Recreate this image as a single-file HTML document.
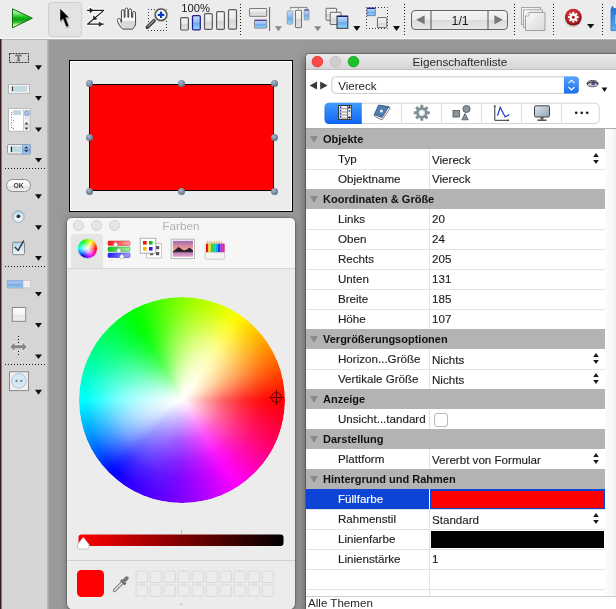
<!DOCTYPE html>
<html><head><meta charset="utf-8">
<style>
*{margin:0;padding:0;box-sizing:border-box}
html,body{width:616px;height:609px;overflow:hidden;background:#999;font-family:"Liberation Sans",sans-serif;position:relative}
.a{position:absolute}
#tb,#pal,#cp,#pw{will-change:transform}
#tb{left:0;top:0;width:616px;height:40px;background:#ececec;border-bottom:1px solid #b4b4b4}
#pal{left:0;top:40px;width:47px;height:569px;background:#d5d5d5}
#palEdge{left:47px;top:40px;width:2px;height:569px;background:linear-gradient(90deg,#bdbdbd,#a6a6a6)}
.tri{position:absolute;width:0;height:0;border-left:4px solid transparent;border-right:4px solid transparent;border-top:5px solid #111}
.dsep{position:absolute;border-left:1px dotted #222;width:0}
.hsep{position:absolute;border-top:1px dotted #222;height:0}
/* form */
#form{left:69px;top:60px;width:224px;height:152px;background:#ececec;border:1px solid #000;box-shadow:inset 0 0 0 1px #fff}
#rect{left:89px;top:84px;width:185px;height:107px;background:#f00;border:1px solid #000}
.hd{position:absolute;width:7px;height:7px;border-radius:50%;background:radial-gradient(circle at 40% 35%,#aebccb,#6f8197 55%,#505f72)}
/* colors panel */
#cp{left:67px;top:218px;width:228px;height:392px;background:#ececec;border-radius:5px 5px 7px 7px;overflow:hidden;box-shadow:0 0 0 1px rgba(0,0,0,.15),0 1px 6px rgba(0,0,0,.35)}
#cpTop{left:0;top:0;width:228px;height:51px;background:#f6f6f6;border-bottom:1px solid #d6d6d6}
.tl{position:absolute;width:11px;height:11px;border-radius:50%;background:#e6e6e6;border:1px solid #d2d2d2}
#wheel{left:0;top:0;width:206px;height:206px;border-radius:50%;
 background:radial-gradient(circle closest-side,#fff 0%,rgba(255,255,255,.92) 6%,rgba(255,255,255,.6) 22%,rgba(255,255,255,.28) 40%,rgba(255,255,255,.07) 60%,rgba(255,255,255,0) 76%),
 conic-gradient(from 90deg,#ff0000 0deg,#ff0014 5deg,#ff0027 10deg,#ff003a 15deg,#ff004d 20deg,#ff0061 25deg,#ff0077 30deg,#ff008f 35deg,#ff00a9 40deg,#ff00c3 45deg,#ff00dd 50deg,#ff00f5 55deg,#f300ff 60deg,#de00ff 65deg,#ca00ff 70deg,#b700ff 75deg,#a400ff 80deg,#9100ff 85deg,#8000ff 90deg,#7100ff 95deg,#6400ff 100deg,#5800ff 105deg,#4c00ff 110deg,#3f00ff 115deg,#3200ff 120deg,#2300ff 125deg,#1000ff 130deg,#000bff 135deg,#0028ff 140deg,#0047ff 145deg,#0064ff 150deg,#0080ff 155deg,#009bff 160deg,#00b4ff 165deg,#00cdff 170deg,#00e6ff 175deg,#00ffff 180deg,#00ffeb 185deg,#00ffd7 190deg,#00ffc3 195deg,#00ffaf 200deg,#00ff9b 205deg,#00ff87 210deg,#00ff72 215deg,#00ff5d 220deg,#00ff47 225deg,#00ff32 230deg,#00ff1b 235deg,#00ff05 240deg,#12ff00 245deg,#2aff00 250deg,#42ff00 255deg,#5aff00 260deg,#72ff00 265deg,#88ff00 270deg,#9cff00 275deg,#afff00 280deg,#c0ff00 285deg,#d1ff00 290deg,#e2ff00 295deg,#f4ff00 300deg,#fff700 305deg,#ffe200 310deg,#ffcd00 315deg,#ffb800 320deg,#ffa200 325deg,#ff8c00 330deg,#ff7600 335deg,#ff5e00 340deg,#ff4600 345deg,#ff2e00 350deg,#ff1700 355deg,#ff0000 360deg)}
#wheel2{left:0;top:0;width:206px;height:206px;border-radius:50%;
 background:radial-gradient(circle closest-side,rgba(255,255,255,.8) 0%,rgba(255,255,255,.7) 40%,rgba(255,255,255,.5) 62%,rgba(255,255,255,.22) 80%,rgba(255,255,255,0) 94%);
 -webkit-mask-image:conic-gradient(from 90deg,rgba(0,0,0,0.20) 0deg,rgba(0,0,0,0.18) 6deg,rgba(0,0,0,0.18) 12deg,rgba(0,0,0,0.19) 18deg,rgba(0,0,0,0.20) 24deg,rgba(0,0,0,0.20) 30deg,rgba(0,0,0,0.18) 36deg,rgba(0,0,0,0.14) 42deg,rgba(0,0,0,0.10) 48deg,rgba(0,0,0,0.07) 54deg,rgba(0,0,0,0.05) 60deg,rgba(0,0,0,0.04) 66deg,rgba(0,0,0,0.04) 72deg,rgba(0,0,0,0.05) 78deg,rgba(0,0,0,0.07) 84deg,rgba(0,0,0,0.10) 90deg,rgba(0,0,0,0.15) 96deg,rgba(0,0,0,0.21) 102deg,rgba(0,0,0,0.29) 108deg,rgba(0,0,0,0.37) 114deg,rgba(0,0,0,0.45) 120deg,rgba(0,0,0,0.54) 126deg,rgba(0,0,0,0.64) 132deg,rgba(0,0,0,0.75) 138deg,rgba(0,0,0,0.84) 144deg,rgba(0,0,0,0.90) 150deg,rgba(0,0,0,0.94) 156deg,rgba(0,0,0,0.96) 162deg,rgba(0,0,0,0.96) 168deg,rgba(0,0,0,0.94) 174deg,rgba(0,0,0,0.90) 180deg,rgba(0,0,0,0.83) 186deg,rgba(0,0,0,0.73) 192deg,rgba(0,0,0,0.61) 198deg,rgba(0,0,0,0.50) 204deg,rgba(0,0,0,0.40) 210deg,rgba(0,0,0,0.31) 216deg,rgba(0,0,0,0.21) 222deg,rgba(0,0,0,0.12) 228deg,rgba(0,0,0,0.06) 234deg,rgba(0,0,0,0.05) 240deg,rgba(0,0,0,0.10) 246deg,rgba(0,0,0,0.19) 252deg,rgba(0,0,0,0.31) 258deg,rgba(0,0,0,0.44) 264deg,rgba(0,0,0,0.55) 270deg,rgba(0,0,0,0.66) 276deg,rgba(0,0,0,0.77) 282deg,rgba(0,0,0,0.88) 288deg,rgba(0,0,0,0.97) 294deg,rgba(0,0,0,1.00) 300deg,rgba(0,0,0,0.97) 306deg,rgba(0,0,0,0.90) 312deg,rgba(0,0,0,0.80) 318deg,rgba(0,0,0,0.69) 324deg,rgba(0,0,0,0.60) 330deg,rgba(0,0,0,0.51) 336deg,rgba(0,0,0,0.42) 342deg,rgba(0,0,0,0.33) 348deg,rgba(0,0,0,0.25) 354deg,rgba(0,0,0,0.20) 360deg);mask-image:conic-gradient(from 90deg,rgba(0,0,0,0.20) 0deg,rgba(0,0,0,0.18) 6deg,rgba(0,0,0,0.18) 12deg,rgba(0,0,0,0.19) 18deg,rgba(0,0,0,0.20) 24deg,rgba(0,0,0,0.20) 30deg,rgba(0,0,0,0.18) 36deg,rgba(0,0,0,0.14) 42deg,rgba(0,0,0,0.10) 48deg,rgba(0,0,0,0.07) 54deg,rgba(0,0,0,0.05) 60deg,rgba(0,0,0,0.04) 66deg,rgba(0,0,0,0.04) 72deg,rgba(0,0,0,0.05) 78deg,rgba(0,0,0,0.07) 84deg,rgba(0,0,0,0.10) 90deg,rgba(0,0,0,0.15) 96deg,rgba(0,0,0,0.21) 102deg,rgba(0,0,0,0.29) 108deg,rgba(0,0,0,0.37) 114deg,rgba(0,0,0,0.45) 120deg,rgba(0,0,0,0.54) 126deg,rgba(0,0,0,0.64) 132deg,rgba(0,0,0,0.75) 138deg,rgba(0,0,0,0.84) 144deg,rgba(0,0,0,0.90) 150deg,rgba(0,0,0,0.94) 156deg,rgba(0,0,0,0.96) 162deg,rgba(0,0,0,0.96) 168deg,rgba(0,0,0,0.94) 174deg,rgba(0,0,0,0.90) 180deg,rgba(0,0,0,0.83) 186deg,rgba(0,0,0,0.73) 192deg,rgba(0,0,0,0.61) 198deg,rgba(0,0,0,0.50) 204deg,rgba(0,0,0,0.40) 210deg,rgba(0,0,0,0.31) 216deg,rgba(0,0,0,0.21) 222deg,rgba(0,0,0,0.12) 228deg,rgba(0,0,0,0.06) 234deg,rgba(0,0,0,0.05) 240deg,rgba(0,0,0,0.10) 246deg,rgba(0,0,0,0.19) 252deg,rgba(0,0,0,0.31) 258deg,rgba(0,0,0,0.44) 264deg,rgba(0,0,0,0.55) 270deg,rgba(0,0,0,0.66) 276deg,rgba(0,0,0,0.77) 282deg,rgba(0,0,0,0.88) 288deg,rgba(0,0,0,0.97) 294deg,rgba(0,0,0,1.00) 300deg,rgba(0,0,0,0.97) 306deg,rgba(0,0,0,0.90) 312deg,rgba(0,0,0,0.80) 318deg,rgba(0,0,0,0.69) 324deg,rgba(0,0,0,0.60) 330deg,rgba(0,0,0,0.51) 336deg,rgba(0,0,0,0.42) 342deg,rgba(0,0,0,0.33) 348deg,rgba(0,0,0,0.25) 354deg,rgba(0,0,0,0.20) 360deg)}
/* props window */
#pw{left:306px;top:54px;width:320px;height:560px;background:#fff;border-radius:4px 4px 0 0;overflow:hidden;box-shadow:0 0 0 1px rgba(0,0,0,.25),-2px 3px 8px rgba(0,0,0,.35)}
#pwTitle{left:0;top:0;width:320px;height:16px;background:linear-gradient(#eceaec,#d6d4d6);border-bottom:1px solid #c0bec0;font-size:11.7px;color:#2a2a2a;line-height:16px}
.row{position:absolute;left:0;width:299px;height:20px;box-shadow:0 1px 0 #e4e4e4;font-size:11.6px;color:#1e1e1e;-webkit-text-stroke:.15px #1e1e1e}
.row.sel{-webkit-text-stroke:.15px #fff}
.row .k{position:absolute;left:32px;top:3px;white-space:nowrap}
.row .v{position:absolute;left:126px;top:3.4px;white-space:nowrap}
.row .v.vp{top:4.4px}
.row .cd{position:absolute;left:123px;top:0;width:1px;height:21px;background:#e3e3e3}
.row.sel{background:#0c44d6}
.row.sel .cd{background:#fff}
.row.sel .k{color:#fff}
.hdr{position:absolute;left:0;width:299px;height:20px;background:#b3b3b3;font-size:11px;font-weight:bold;color:#111}
.hdr .t{position:absolute;left:17px;top:4px;white-space:nowrap}
.hdr .tr{position:absolute;left:4px;top:7px;width:0;height:0;border-left:4.5px solid transparent;border-right:4.5px solid transparent;border-top:7px solid #8a8a8a}
.ud{position:absolute;left:285.5px;top:3px}
.cb{position:absolute;left:128px;top:4px;width:14px;height:14px;border:1px solid #b8b8b8;border-radius:3px;background:#fff}
.well{position:absolute;left:125px;top:2px;width:173px;height:17px}
.selbox{position:absolute;left:0;top:0;width:123px;height:20px;background:#0f4fd0}
#scr{left:299px;top:75px;width:21px;height:467px;background:linear-gradient(90deg,#fdfdfd 0,#f9f9f9 2px,#f9f9f9 9px,#ebebeb 9px,#ebebeb 10px,#f6f6f6 10px)}
#tline{left:0;top:74px;width:320px;height:1px;background:#ababab}
#foot{left:0;top:542px;width:320px;height:20px;border-top:1px solid #cfcfcf;background:#fff;font-size:11.6px;color:#1e1e1e;padding-left:2px;line-height:11px}

</style></head><body>
<div id="tb" class="a"><svg class="a" style="left:0;top:0" width="616" height="40" viewBox="0 0 616 40">
<defs>
<linearGradient id="gPlay" x1="0" y1="0" x2="0" y2="1">
 <stop offset="0" stop-color="#c8f4c0"/><stop offset=".22" stop-color="#8ee88a"/><stop offset=".4" stop-color="#22cc2a"/><stop offset=".55" stop-color="#08a00e"/><stop offset=".72" stop-color="#38c038"/><stop offset=".86" stop-color="#e2f0b0"/><stop offset="1" stop-color="#f8f2c4"/>
</linearGradient>
<linearGradient id="gBar" x1="0" y1="0" x2="0" y2="1">
 <stop offset="0" stop-color="#f6f6f6"/><stop offset=".5" stop-color="#e8e8e8"/><stop offset=".52" stop-color="#d6d6d6"/><stop offset="1" stop-color="#e6e6e6"/>
</linearGradient>
<linearGradient id="gBlue" x1="0" y1="0" x2="0" y2="1">
 <stop offset="0" stop-color="#c8dcf8"/><stop offset=".45" stop-color="#8fbdf2"/><stop offset=".55" stop-color="#6fa8ee"/><stop offset="1" stop-color="#8ee0f8"/>
</linearGradient>
<linearGradient id="gNav" x1="0" y1="0" x2="0" y2="1">
 <stop offset="0" stop-color="#f4f4f4"/><stop offset=".5" stop-color="#ececec"/><stop offset=".52" stop-color="#dcdcdc"/><stop offset="1" stop-color="#e8e8e8"/>
</linearGradient>
<linearGradient id="gPage" x1="0" y1="0" x2="1" y2="1">
 <stop offset="0" stop-color="#fbfbfb"/><stop offset="1" stop-color="#d8d8d8"/>
</linearGradient>
<radialGradient id="gGear" cx=".45" cy=".35" r=".65">
 <stop offset="0" stop-color="#e0484c"/><stop offset=".7" stop-color="#b31d22"/><stop offset="1" stop-color="#7a0e12"/>
</radialGradient>
<radialGradient id="gLens" cx=".5" cy=".5" r=".5">
 <stop offset="0" stop-color="#ffffff"/><stop offset=".75" stop-color="#f0f0f0"/><stop offset="1" stop-color="#9a9a9a"/>
</radialGradient>
</defs>
<!-- play -->
<path d="M12.5 8.8 L32.3 18.2 L12.5 27.8 Z" fill="url(#gPlay)" stroke="#0e700e" stroke-width="1" stroke-linejoin="round"/>
<!-- selected arrow button -->
<rect x="48.5" y="2.5" width="33" height="34" rx="3" fill="#e3e3e3" stroke="#cfcfcf"/>
<path d="M60.3 9 L60.3 20.8 L63.2 18.5 L66.3 26.6 L68.4 25.8 L65.4 17.6 L68.4 17 Z" fill="#000" opacity=".22" transform="translate(.6 1.1)" stroke="#000" stroke-width="1.2" stroke-linejoin="round"/>
<path d="M60.3 9 L60.3 20.8 L63.2 18.5 L66.3 26.6 L68.4 25.8 L65.4 17.6 L68.4 17 Z" fill="#000"/>
<!-- Z tool -->
<g fill="#fff" stroke="#fff" stroke-width="3.2" stroke-linejoin="round" opacity=".85">
<path d="M87.1 10.4 H103.8 L87.5 24.2 H103.8" fill="none"/>
<path d="M89.8 8 L93.2 10.4 L89.8 12.8 Z"/><path d="M93.2 19.6 L93.6 15.6 L97.2 19.1 Z"/><path d="M99 21.8 L102.2 24.2 L99 26.6 Z"/>
</g>
<g fill="#1c2424" stroke="#1c2424" stroke-linejoin="round">
<path d="M87.1 10.4 H103.8 L87.5 24.2 H103.8" fill="none" stroke-width="1.2"/>
<path d="M90 8.1 L93 10.4 L90 12.7 Z" stroke-width=".6"/><path d="M93.2 19.6 L93.7 15.9 L96.9 19.1 Z" stroke-width=".6"/><path d="M99.2 21.9 L102 24.2 L99.2 26.5 Z" stroke-width=".6"/>
</g>
<!-- hand -->
<path d="M122.6 29.1 L132.7 29.1 C134 27.5 135.6 25.5 135.6 23.5 L135.6 12.8 C135.6 11 132.8 11 132.8 12.8 L132.8 17.3 L131.6 17.3 L131.6 10.2 C131.6 8.4 128.7 8.4 128.7 10.2 L128.7 17.3 L127.9 17.3 L127.9 9.3 C127.9 7.5 125 7.5 125 9.3 L125 17.3 L124.2 17.3 L124.2 11 C124.2 9.2 121.4 9.2 121.4 11 L121.4 21 C120.8 19.8 119.8 18.4 118.6 18.4 C117.6 18.4 117.2 19.2 117.4 20.5 C117.8 23.5 120 26.5 122.6 29.1 Z" fill="#fbfbfb" stroke="#fff" stroke-width="2.4" stroke-opacity=".6" stroke-linejoin="round"/>
<path d="M121.5 20.7 H135.3 V23.5 C135.3 25.5 134 27.3 132.6 28.6 H122.8 C121 27 119.5 25 118.7 22.8 Z" fill="#d9d9d9"/>
<path d="M122.6 29.1 L132.7 29.1 C134 27.5 135.6 25.5 135.6 23.5 L135.6 12.8 C135.6 11 132.8 11 132.8 12.8 L132.8 17.3 L131.6 17.3 L131.6 10.2 C131.6 8.4 128.7 8.4 128.7 10.2 L128.7 17.3 L127.9 17.3 L127.9 9.3 C127.9 7.5 125 7.5 125 9.3 L125 17.3 L124.2 17.3 L124.2 11 C124.2 9.2 121.4 9.2 121.4 11 L121.4 21 C120.8 19.8 119.8 18.4 118.6 18.4 C117.6 18.4 117.2 19.2 117.4 20.5 C117.8 23.5 120 26.5 122.6 29.1 Z" fill="none" stroke="#3a3a3a" stroke-width="1" stroke-linejoin="round"/>
<line x1="121.2" y1="19.8" x2="121.2" y2="22.6" stroke="#333" stroke-width="1.2"/>
<!-- zoom -->
<rect x="148.5" y="9.5" width="18" height="21" fill="none" stroke="#333" stroke-width="1" stroke-dasharray="1 2" stroke-dashoffset=".5"/>
<path d="M154.2 20.6 L147.3 27.3" stroke="#fff" stroke-width="5" stroke-linecap="round" opacity=".5"/>
<path d="M154.2 20.6 L147.3 27.3" stroke="#3a3a3a" stroke-width="3.6" stroke-linecap="round"/>
<path d="M154 20.4 L148 26.4" stroke="#a0a0a0" stroke-width="1.3" stroke-linecap="round"/>
<circle cx="161" cy="14.8" r="7.6" fill="#fff" opacity=".45"/>
<circle cx="161" cy="14.8" r="5.9" fill="#fffef8" stroke="#555" stroke-width="1.8"/>
<circle cx="161" cy="14.8" r="6.9" fill="none" stroke="#bbb" stroke-width=".6"/>
<path d="M161 11.5 V18.1 M157.7 14.8 H164.3" stroke="#0a3cc0" stroke-width="2.2"/>
<!-- 100% -->
<text x="181.3" y="12.2" font-family="Liberation Sans" font-size="11.2" fill="#1a1a1a">100%</text>
<g stroke="#5a5a5a" stroke-width="1.2">
<rect x="180.6" y="17.6" width="7.8" height="12.4" rx="1.2" fill="url(#gBar)"/>
<rect x="192.5" y="15.6" width="7.8" height="14.3" rx="1.2" fill="url(#gBlue)" stroke="#1c1c8a"/>
<rect x="204.5" y="13.6" width="7.8" height="15.8" rx="1.2" fill="url(#gBar)"/>
<rect x="216.6" y="11.6" width="7.8" height="17.8" rx="1.2" fill="url(#gBar)"/>
<rect x="228.5" y="9.6" width="8" height="19.6" rx="1.2" fill="url(#gBar)"/>
</g>
<line x1="240.5" y1="4" x2="240.5" y2="35" stroke="#1a1a1a" stroke-width="1" stroke-dasharray="1 2"/>
<!-- align -->
<rect x="249.5" y="8.5" width="17.2" height="7.8" rx=".5" fill="url(#gBar)" stroke="#7a7a7a"/>
<rect x="254.5" y="20.3" width="12.2" height="7.8" rx=".5" fill="url(#gBlue)" stroke="#8a8aa0"/>
<line x1="254.5" y1="20.3" x2="266.7" y2="20.3" stroke="#4a3a8a" stroke-width="1.2"/>
<line x1="269.6" y1="7" x2="269.6" y2="31" stroke="#5a5a5a" stroke-width="1"/>
<path d="M274.8 26.2 H282 L278.4 31.2 Z" fill="#8a8a8a"/>
<!-- distribute -->
<path d="M290.5 9 V7.4 H307 V9 M298.6 7.4 V9" fill="none" stroke="#777" stroke-width=".9"/>
<rect x="287.2" y="10.8" width="5.6" height="13.4" rx=".8" fill="url(#gBlue)" stroke="#8a9aaa" stroke-width=".8"/>
<rect x="295.5" y="10.3" width="6" height="17.3" rx=".5" fill="url(#gBar)" stroke="#707070" stroke-width="1"/>
<rect x="304.2" y="10" width="4.8" height="10" rx=".8" fill="url(#gBlue)" stroke="#8a9aaa" stroke-width=".8"/>
<line x1="304.2" y1="10" x2="309" y2="10" stroke="#3a3a8a" stroke-width="1.1"/>
<path d="M314.2 26.2 H321.2 L317.7 31.2 Z" fill="#8a8a8a"/>
<!-- layers -->
<rect x="326" y="8.3" width="10.6" height="12" rx=".5" fill="url(#gBar)" stroke="#6a6a6a" stroke-width="1"/>
<rect x="330.2" y="12.3" width="10.8" height="12.2" rx=".5" fill="url(#gBar)" stroke="#6a6a6a" stroke-width="1"/>
<rect x="337" y="16.3" width="10.8" height="12" fill="url(#gBlue)" stroke="#3a3a4a" stroke-width="1.1"/>
<line x1="337" y1="16.3" x2="347.8" y2="16.3" stroke="#1a1a7a" stroke-width="1.4"/>
<path d="M353.3 26 H360.3 L356.8 31 Z" fill="#111"/>
<!-- group -->
<rect x="366.5" y="7.5" width="21" height="21" fill="none" stroke="#333" stroke-width="1" stroke-dasharray="1 2" stroke-dashoffset=".5"/>
<rect x="367" y="8.3" width="8.2" height="7.4" fill="url(#gBlue)" stroke="#5a6aaa" stroke-width=".8"/>
<line x1="367" y1="8.3" x2="375.2" y2="8.3" stroke="#1a1a8a" stroke-width="1.3"/>
<rect x="377.4" y="17.6" width="9.4" height="10" rx=".5" fill="url(#gBar)" stroke="#6a6a6a" stroke-width="1"/>
<path d="M393 26 H400 L396.5 31 Z" fill="#111"/>
<line x1="404.5" y1="4" x2="404.5" y2="35" stroke="#1a1a1a" stroke-width="1" stroke-dasharray="1 2"/>
<!-- nav -->
<rect x="411.5" y="10.5" width="96" height="19" rx="3.5" fill="url(#gNav)" stroke="#666"/>
<line x1="431" y1="10.5" x2="431" y2="29.5" stroke="#555"/>
<line x1="488" y1="10.5" x2="488" y2="29.5" stroke="#555"/>
<path d="M416.2 19.7 L424.6 15.2 L424.6 24.2 Z" fill="#777"/>
<path d="M502.8 19.7 L494.4 15.2 L494.4 24.2 Z" fill="#777"/>
<text x="451.5" y="25" font-family="Liberation Sans" font-size="12.4" fill="#1a1a1a">1/1</text>
<line x1="514.5" y1="4" x2="514.5" y2="35" stroke="#1a1a1a" stroke-width="1" stroke-dasharray="1 2"/>
<!-- pages -->
<rect x="521.5" y="7.5" width="19" height="17" fill="url(#gPage)" stroke="#a8a8a8"/>
<rect x="523.5" y="9.8" width="19" height="17.5" fill="url(#gPage)" stroke="#a8a8a8"/>
<path d="M529 12.5 H545 V30.5 H525.5 V16 Z" fill="url(#gPage)" stroke="#a0a0a0"/>
<path d="M525.5 16 L529 16 L529 12.5" fill="#fff" stroke="#a0a0a0" stroke-width=".8"/>
<line x1="553.5" y1="4" x2="553.5" y2="35" stroke="#1a1a1a" stroke-width="1" stroke-dasharray="1 2"/>
<!-- gear -->
<circle cx="573.3" cy="17.4" r="8.6" fill="#000" opacity=".18" transform="translate(0 .9)"/>
<circle cx="573.3" cy="17.2" r="8.4" fill="url(#gGear)"/>
<g transform="translate(573.3 17.2)" fill="#fff">
<circle r="3.6"/>
<g id="teeth"><rect x="-1" y="-5.3" width="2" height="2.2"/></g>
<use href="#teeth" transform="rotate(45)"/><use href="#teeth" transform="rotate(90)"/><use href="#teeth" transform="rotate(135)"/><use href="#teeth" transform="rotate(180)"/><use href="#teeth" transform="rotate(225)"/><use href="#teeth" transform="rotate(270)"/><use href="#teeth" transform="rotate(315)"/>
<circle r="1.5" fill="#b31d22"/>
</g>
<path d="M587 24 H594.3 L590.7 28.6 Z" fill="#111"/>
<line x1="602.5" y1="4" x2="602.5" y2="35" stroke="#1a1a1a" stroke-width="1" stroke-dasharray="1 2"/>
<!-- partial blue icon -->
<linearGradient id="gFold" x1="0" y1="0" x2="0" y2="1"><stop offset="0" stop-color="#1a6ed8"/><stop offset="1" stop-color="#62acf0"/></linearGradient>
<path d="M611 30.6 V9 L612.5 6 L613.5 8.5 H620 V30.6 Z" fill="url(#gFold)" stroke="#2a70c8" stroke-width=".8"/>
<rect x="615.2" y="15" width="4" height="9" fill="#cfe4f8" opacity=".8"/>
<!-- bottom edge -->
<line x1="0" y1="38.5" x2="616" y2="38.5" stroke="#f8f8f8"/>
</svg>
</div>
<div id="pal" class="a"><svg class="a" style="left:0;top:-1px" width="47" height="570" viewBox="0 39 47 570">
<defs>
<linearGradient id="pBtn" x1="0" y1="0" x2="0" y2="1">
 <stop offset="0" stop-color="#ffffff"/><stop offset=".5" stop-color="#f4f4f4"/><stop offset=".55" stop-color="#e4e4e4"/><stop offset="1" stop-color="#f0f0f0"/>
</linearGradient>
<linearGradient id="pBlue" x1="0" y1="0" x2="0" y2="1">
 <stop offset="0" stop-color="#a9c8ec"/><stop offset=".5" stop-color="#8db8ea"/><stop offset=".55" stop-color="#6aa2e6"/><stop offset="1" stop-color="#a8d4f2"/>
</linearGradient>
<radialGradient id="pRadio" cx=".5" cy=".65" r=".6">
 <stop offset="0" stop-color="#ffffff"/><stop offset=".6" stop-color="#d8ecfa"/><stop offset="1" stop-color="#a0c8e8"/>
</radialGradient>
<linearGradient id="pChk" x1="0" y1="0" x2="0" y2="1">
 <stop offset="0" stop-color="#a8d0f0"/><stop offset="1" stop-color="#f4fbff"/>
</linearGradient>
</defs>
<!-- left dark strip -->
<rect x="0" y="39" width="1.5" height="570" fill="#3a1a1e"/>
<g fill="#111">
<path d="M35 65.3 H42 L38.5 70 Z"/>
<path d="M35 96 H42 L38.5 100.8 Z"/>
<path d="M35 127.4 H42 L38.5 132 Z"/>
<path d="M35 158 H42 L38.5 162.6 Z"/>
<path d="M35 194.3 H42 L38.5 199 Z"/>
<path d="M35 225.3 H42 L38.5 230 Z"/>
<path d="M35 256.1 H42 L38.5 260.7 Z"/>
<path d="M35 292 H42 L38.5 296.6 Z"/>
<path d="M35 323 H42 L38.5 327.8 Z"/>
<path d="M35 354.5 H42 L38.5 359 Z"/>
<path d="M35 389.8 H42 L38.5 394.7 Z"/>
</g>
<g stroke="#1a1a1a" stroke-width="1" stroke-dasharray="1 2">
<line x1="5" y1="168.5" x2="46" y2="168.5"/>
<line x1="5" y1="266.5" x2="46" y2="266.5"/>
<line x1="5" y1="364.5" x2="46" y2="364.5"/>
</g>
<!-- label -->
<rect x="9.5" y="53.5" width="19" height="9" fill="none" stroke="#2a2a2a" stroke-dasharray="2 1"/>
<text x="15.6" y="61" font-family="Liberation Serif" font-weight="bold" font-size="9" fill="#6a6a6a" stroke="#6a6a6a" stroke-width=".3">T</text>
<!-- text field -->
<rect x="8.5" y="84.5" width="21" height="8.8" fill="#fafafa" stroke="#b4b4b4"/>
<rect x="10.8" y="85.8" width="16.6" height="6" fill="#c3dce4"/>
<line x1="12.5" y1="86.5" x2="12.5" y2="91" stroke="#333" stroke-width="1"/>
<!-- list -->
<rect x="8.5" y="108.5" width="21.5" height="22.8" fill="#fff" stroke="#b8b8b8"/>
<rect x="12.9" y="110.1" width="8.4" height="4.9" fill="#bcd8e0"/>
<g fill="#555"><rect x="11" y="112" width=".9" height=".9"/><rect x="11" y="114.5" width=".9" height=".9"/><rect x="11" y="117" width=".9" height=".9"/><rect x="11" y="119.5" width=".9" height=".9"/><rect x="13" y="120" width=".9" height=".9"/><rect x="11" y="122" width=".9" height=".9"/><rect x="11" y="124.5" width=".9" height=".9"/><rect x="11" y="127" width=".9" height=".9"/><rect x="13" y="128" width=".9" height=".9"/></g>
<rect x="23.6" y="108.5" width="6.4" height="22.8" fill="#f2f2f2" stroke="#c0c0c0" stroke-width=".8"/>
<rect x="24.6" y="110.6" width="4.4" height="5.2" rx="1.6" fill="#a6c2e6" stroke="#6f8fc0" stroke-width=".7"/><rect x="23.6" y="117.5" width="6.4" height="1.6" fill="#e0e0e0"/>
<path d="M24.5 124.5 L26.5 122 L28.5 124.5 Z M24.5 127.5 L28.5 127.5 L26.5 130 Z" fill="#444"/>
<line x1="23.6" y1="126" x2="30" y2="126" stroke="#c0c0c0" stroke-width=".7"/>
<!-- stepper -->
<rect x="7.5" y="144.5" width="22.8" height="9.5" rx="1.5" fill="#f6f6f6" stroke="#9a9a9a"/>
<rect x="10" y="146" width="11.8" height="6.5" fill="#c0dae4"/>
<line x1="11.5" y1="146.5" x2="11.5" y2="152" stroke="#222" stroke-width="1.1"/>
<rect x="22.4" y="144.5" width="7.8" height="9.5" fill="url(#pBlue)" stroke="#7f9ed0" stroke-width=".8"/>
<path d="M24.3 148.5 L26.3 146.3 L28.3 148.5 Z M24.3 150 L28.3 150 L26.3 152.3 Z" fill="#333"/>
<!-- OK button -->
<rect x="6.5" y="179.5" width="24" height="12" rx="6" fill="url(#pBtn)" stroke="#8e8e8e"/>
<text x="13.4" y="188.4" font-family="Liberation Sans" font-weight="bold" font-size="6.8" fill="#3a3a3a">OK</text>
<!-- radio -->
<circle cx="18.4" cy="216.5" r="5.8" fill="url(#pRadio)" stroke="#a8a8a8" stroke-width=".9"/>
<circle cx="18.4" cy="216.3" r="1.9" fill="#333"/>
<!-- checkbox -->
<rect x="12.5" y="242.2" width="12" height="12.5" rx="1.5" fill="url(#pChk)" stroke="#8a8a8a"/>
<path d="M14.8 247 L18.2 250.4 L23.8 240.5" fill="none" stroke="#333" stroke-width="1.4"/>
<!-- progress -->
<rect x="7.3" y="280.5" width="23.4" height="7.4" fill="#f0f0f0" stroke="#c6c6c6" stroke-width=".8"/>
<rect x="7.3" y="280.5" width="15.5" height="7.4" fill="url(#pBlue)" stroke="#88a8d8" stroke-width=".8"/>
<line x1="11" y1="284" x2="21" y2="284" stroke="#fff" stroke-width=".6" stroke-dasharray="1 2" opacity=".6"/>
<!-- box -->
<rect x="12.3" y="307.5" width="13.4" height="13.8" fill="url(#pBtn)" stroke="#8a8a8a"/>
<!-- splitter -->
<line x1="18.5" y1="336" x2="18.5" y2="357" stroke="#1a1a1a" stroke-dasharray="1 2"/>
<path d="M10.3 346.8 L14.2 343.2 L14.2 345.5 L22.8 345.5 L22.8 343.2 L26.7 346.8 L22.8 350.4 L22.8 348.1 L14.2 348.1 L14.2 350.4 Z" fill="#fff" stroke="#fff" stroke-width="2" opacity=".8"/><path d="M10.3 346.8 L14.2 343.2 L14.2 345.5 L22.8 345.5 L22.8 343.2 L26.7 346.8 L22.8 350.4 L22.8 348.1 L14.2 348.1 L14.2 350.4 Z" fill="#8a8a8a" stroke="#6a6a6a" stroke-width=".5"/>
<!-- plugin -->
<rect x="9.5" y="371.8" width="19" height="18.8" fill="#efefef" stroke="#8a8a8a"/>
<circle cx="18.9" cy="380.9" r="7.3" fill="#d4e8f6" stroke="#a8b8c8" stroke-width=".8"/>
<circle cx="16.5" cy="380.9" r="1.1" fill="#777"/><circle cx="21.3" cy="380.9" r="1.1" fill="#777"/>
</svg>
</div>
<div id="palEdge" class="a"></div>
<div id="form" class="a"></div>
<div id="rect" class="a"></div>
<div class="hd" style="left:85.7px;top:80.4px"></div>
<div class="hd" style="left:178.0px;top:80.4px"></div>
<div class="hd" style="left:270.5px;top:80.4px"></div>
<div class="hd" style="left:85.7px;top:134.0px"></div>
<div class="hd" style="left:270.5px;top:134.0px"></div>
<div class="hd" style="left:85.7px;top:187.5px"></div>
<div class="hd" style="left:178.0px;top:187.5px"></div>
<div class="hd" style="left:270.5px;top:187.5px"></div>
<div id="cp" class="a"><div id="cpTop" class="a"></div>
<div class="tl" style="left:5.9px;top:1.8px"></div>
<div class="tl" style="left:23.8px;top:1.8px"></div>
<div class="tl" style="left:41.9px;top:1.8px"></div>
<div class="a" style="left:0;top:0;width:228px;text-align:center;font-size:11.7px;color:#b0b0b0;line-height:16px;padding-top:0px">Farben</div>
<div class="a" style="left:4px;top:16px;width:32px;height:34px;background:#e5e5e5;border-radius:4px 4px 0 0"></div>
<div class="a" style="left:11.1px;top:21.2px;width:18.8px;height:18.8px;border-radius:50%;background:radial-gradient(circle closest-side,#fff 0%,rgba(255,255,255,.7) 35%,rgba(255,255,255,0) 90%),conic-gradient(from 90deg,#f00,#f0f,#00f,#0ff,#0f0,#ff0,#f00);box-shadow:0 .5px 1px rgba(0,0,0,.35)"></div>
<svg class="a" style="left:0;top:0" width="228" height="50" viewBox="67 218 228 50">
<defs>
<linearGradient id="cR" x1="0" x2="1"><stop offset="0" stop-color="#ff1010"/><stop offset="1" stop-color="#ffb0b0"/></linearGradient>
<linearGradient id="cG" x1="0" x2="1"><stop offset="0" stop-color="#10c010"/><stop offset="1" stop-color="#a8f0a8"/></linearGradient>
<linearGradient id="cB" x1="0" x2="1"><stop offset="0" stop-color="#2020ff"/><stop offset="1" stop-color="#a8a8ff"/></linearGradient>
<linearGradient id="cSky" x1="0" y1="0" x2="0" y2="1"><stop offset="0" stop-color="#a068b8"/><stop offset=".5" stop-color="#f0a090"/><stop offset=".62" stop-color="#e89898"/><stop offset=".68" stop-color="#403048"/><stop offset=".75" stop-color="#b880b0"/><stop offset="1" stop-color="#e8a8d0"/></linearGradient>
</defs>
<!-- sliders -->
<rect x="108" y="241" width="22" height="4.4" rx="1" fill="url(#cR)" stroke="#c02020" stroke-width=".5"/>
<rect x="108" y="247" width="22" height="4.4" rx="1" fill="url(#cG)" stroke="#20a020" stroke-width=".5"/>
<rect x="108" y="253" width="22" height="4.4" rx="1" fill="url(#cB)" stroke="#2020c0" stroke-width=".5"/>
<g fill="#fff" stroke="#999" stroke-width=".5">
<path d="M115.6 246.8 a2.2 2.2 0 0 1 -2.2 -2.2 L115.6 241.8 L117.8 244.6 a2.2 2.2 0 0 1 -2.2 2.2Z"/>
<path d="M118.8 252.8 a2.2 2.2 0 0 1 -2.2 -2.2 L118.8 247.8 L121 250.6 a2.2 2.2 0 0 1 -2.2 2.2Z"/>
<path d="M121.8 258.8 a2.2 2.2 0 0 1 -2.2 -2.2 L121.8 253.8 L124 256.6 a2.2 2.2 0 0 1 -2.2 2.2Z"/>
</g>
<!-- palettes -->
<rect x="146.5" y="243.5" width="15" height="14.5" fill="#fff" stroke="#b8b8b8" stroke-width=".8"/>
<g fill="#555"><rect x="156" y="246" width="3.2" height="3.2"/><rect x="150" y="252" width="3.2" height="3.2"/><rect x="156" y="252" width="3.2" height="3.2"/></g>
<rect x="140.3" y="238.3" width="15.5" height="14.8" fill="#fff" stroke="#b0b0b0" stroke-width=".8" filter="drop-shadow(0 .5px .6px rgba(0,0,0,.3))"/>
<rect x="143" y="241" width="3.6" height="3.6" fill="#f01010"/><rect x="149" y="241" width="3.6" height="3.6" fill="#10c020"/>
<rect x="143" y="247" width="3.6" height="3.6" fill="#f8b000"/><rect x="149" y="247" width="3.6" height="3.6" fill="#4010f0"/>
<!-- image -->
<rect x="171.2" y="239.2" width="23.4" height="19.2" fill="#fff" stroke="#a8a8a8" stroke-width=".8"/>
<rect x="172.8" y="240.8" width="20.2" height="16" fill="url(#cSky)"/>
<path d="M172.8 251.8 L175.5 249.5 L178.5 247 L181.5 249 L184 250.5 L186.5 249.8 L189.5 247.6 L193 250.5 V251.8 Z" fill="#2a1a30"/>
<!-- pencils -->
<rect x="205.2" y="244" width="19.4" height="15" rx="1.5" fill="#f4f4f4" stroke="#bdbdbd" stroke-width=".6"/>
<g>
<rect x="206" y="243.5" width="2.4" height="9" fill="#e01818"/><path d="M206 243.5 L207.2 240 L208.4 243.5Z" fill="#e8c080"/>
<rect x="208.4" y="243.5" width="2.4" height="9" fill="#f8e020"/><path d="M208.4 243.5 L209.6 240 L210.8 243.5Z" fill="#e8c080"/>
<rect x="210.8" y="243.5" width="2.4" height="9" fill="#38d030"/><path d="M210.8 243.5 L212 240 L213.2 243.5Z" fill="#e8c080"/>
<rect x="213.2" y="243.5" width="2.4" height="9" fill="#10c8b0"/><path d="M213.2 243.5 L214.4 240 L215.6 243.5Z" fill="#e8c080"/>
<rect x="215.6" y="243.5" width="2.4" height="9" fill="#00b0f0"/><path d="M215.6 243.5 L216.8 240 L218 243.5Z" fill="#e8c080"/>
<rect x="218" y="243.5" width="2.4" height="9" fill="#2040e0"/><path d="M218 243.5 L219.2 240 L220.4 243.5Z" fill="#e8c080"/>
<rect x="220.4" y="243.5" width="2.4" height="9" fill="#c020d0"/><path d="M220.4 243.5 L221.6 240 L222.8 243.5Z" fill="#e8c080"/>
<rect x="222.8" y="243.5" width="1.8" height="9" fill="#f02090"/>
</g>
<rect x="205.2" y="252.5" width="19.4" height="6.5" rx="1" fill="#f4f4f4" stroke="#c4c4c4" stroke-width=".6"/>
</svg>
<div class="a" style="left:12px;top:79px;width:206px;height:206px;border-radius:50%;overflow:hidden">
 <div id="wheel" class="a"></div><div id="wheel2" class="a"></div>
</div>
<svg class="a" style="left:0;top:50px" width="228" height="340" viewBox="67 268 228 340">
<defs>
<linearGradient id="sl" x1="0" x2="1"><stop offset="0" stop-color="#ff0000"/><stop offset="1" stop-color="#000"/></linearGradient>
</defs>
<!-- crosshair -->
<g stroke="#6a0000" stroke-width="1" fill="none">
<circle cx="276.5" cy="397.5" r="5"/>
<line x1="269" y1="397.5" x2="284" y2="397.5"/><line x1="276.5" y1="390" x2="276.5" y2="405"/>
</g>
<line x1="181.5" y1="530.5" x2="181.5" y2="533.5" stroke="#aaa" stroke-width=".8"/>
<rect x="78.5" y="534.6" width="205" height="11.4" rx="3" fill="url(#sl)"/>
<path d="M83.3 549 H79.5 a2 2 0 0 1 -2 -2 V544.5 L83.3 537.3 L89 544.5 V547 a2 2 0 0 1 -2 2 Z" fill="#fff" stroke="#b8b8b8" stroke-width=".8"/>
<line x1="67" y1="560.5" x2="295" y2="560.5" stroke="#d0d0d0"/>
<rect x="77" y="570" width="27" height="27" rx="4.5" fill="#f00"/>
<!-- eyedropper -->
<path d="M114.5 590.5 L122.5 582.5" stroke="#777" stroke-width="3.2" stroke-linecap="round"/>
<path d="M114.5 590.5 L122.5 582.5" stroke="#e8e8e8" stroke-width="1.6" stroke-linecap="round"/>
<path d="M121 580 L125.5 584.5" stroke="#666" stroke-width="2.5"/>
<path d="M123.5 581.5 L126.8 578.2" stroke="#777" stroke-width="3.8" stroke-linecap="round"/>
<rect x="136.0" y="571.1" width="11.4" height="11.4" rx="1.5" fill="none" stroke="#d6d6d6" stroke-width=".9"/>
<rect x="150.0" y="571.1" width="11.4" height="11.4" rx="1.5" fill="none" stroke="#d6d6d6" stroke-width=".9"/>
<rect x="164.0" y="571.1" width="11.4" height="11.4" rx="1.5" fill="none" stroke="#d6d6d6" stroke-width=".9"/>
<rect x="178.0" y="571.1" width="11.4" height="11.4" rx="1.5" fill="none" stroke="#d6d6d6" stroke-width=".9"/>
<rect x="192.0" y="571.1" width="11.4" height="11.4" rx="1.5" fill="none" stroke="#d6d6d6" stroke-width=".9"/>
<rect x="206.0" y="571.1" width="11.4" height="11.4" rx="1.5" fill="none" stroke="#d6d6d6" stroke-width=".9"/>
<rect x="220.0" y="571.1" width="11.4" height="11.4" rx="1.5" fill="none" stroke="#d6d6d6" stroke-width=".9"/>
<rect x="234.0" y="571.1" width="11.4" height="11.4" rx="1.5" fill="none" stroke="#d6d6d6" stroke-width=".9"/>
<rect x="248.0" y="571.1" width="11.4" height="11.4" rx="1.5" fill="none" stroke="#d6d6d6" stroke-width=".9"/>
<rect x="262.0" y="571.1" width="11.4" height="11.4" rx="1.5" fill="none" stroke="#d6d6d6" stroke-width=".9"/>
<rect x="136.0" y="584.9" width="11.4" height="11.4" rx="1.5" fill="none" stroke="#d6d6d6" stroke-width=".9"/>
<rect x="150.0" y="584.9" width="11.4" height="11.4" rx="1.5" fill="none" stroke="#d6d6d6" stroke-width=".9"/>
<rect x="164.0" y="584.9" width="11.4" height="11.4" rx="1.5" fill="none" stroke="#d6d6d6" stroke-width=".9"/>
<rect x="178.0" y="584.9" width="11.4" height="11.4" rx="1.5" fill="none" stroke="#d6d6d6" stroke-width=".9"/>
<rect x="192.0" y="584.9" width="11.4" height="11.4" rx="1.5" fill="none" stroke="#d6d6d6" stroke-width=".9"/>
<rect x="206.0" y="584.9" width="11.4" height="11.4" rx="1.5" fill="none" stroke="#d6d6d6" stroke-width=".9"/>
<rect x="220.0" y="584.9" width="11.4" height="11.4" rx="1.5" fill="none" stroke="#d6d6d6" stroke-width=".9"/>
<rect x="234.0" y="584.9" width="11.4" height="11.4" rx="1.5" fill="none" stroke="#d6d6d6" stroke-width=".9"/>
<rect x="248.0" y="584.9" width="11.4" height="11.4" rx="1.5" fill="none" stroke="#d6d6d6" stroke-width=".9"/>
<rect x="262.0" y="584.9" width="11.4" height="11.4" rx="1.5" fill="none" stroke="#d6d6d6" stroke-width=".9"/>
<circle cx="181.4" cy="604.6" r="1" fill="#bbb"/>
</svg>
</div>
<div id="pw" class="a"><div id="pwTitle" class="a"><span style="position:absolute;left:106.5px;top:-.5px">Eigenschaftenliste</span></div>
<svg class="a" style="left:0;top:0" width="320" height="75" viewBox="306 54 320 75">
<defs>
<linearGradient id="wBlue" x1="0" y1="0" x2="0" y2="1"><stop offset="0" stop-color="#5aa2fa"/><stop offset="1" stop-color="#1a72f0"/></linearGradient>
<linearGradient id="segBlue" x1="0" y1="0" x2="0" y2="1"><stop offset="0" stop-color="#439afd"/><stop offset="1" stop-color="#0b66f4"/></linearGradient>
<linearGradient id="monG" x1="0" y1="0" x2="1" y2="1"><stop offset="0" stop-color="#dfe6ec"/><stop offset="1" stop-color="#8ea2b2"/></linearGradient>
</defs>
<circle cx="317.4" cy="61.6" r="5.3" fill="#fd4c48" stroke="#e02a26" stroke-width=".8"/>
<circle cx="335.4" cy="61.6" r="5.3" fill="#cfcfcf" stroke="#bcbcbc" stroke-width=".7"/>
<circle cx="353.5" cy="61.6" r="5.3" fill="#1ac32a" stroke="#10a01e" stroke-width=".8"/>
<!-- nav arrows -->
<path d="M309.6 85.5 L317 81.5 L317 89.6 Z" fill="#3a3a3a"/>
<path d="M327.6 85.5 L320.2 81.5 L320.2 89.6 Z" fill="#3a3a3a"/>
<!-- popup -->
<rect x="331.8" y="76.8" width="246.8" height="16.6" rx="3.5" fill="#fff" stroke="#c4c4c4" stroke-width=".9"/>
<path d="M564 76.4 H575 a3.8 3.8 0 0 1 3.8 3.8 V89.8 a3.8 3.8 0 0 1 -3.8 3.8 H564 Z" fill="url(#wBlue)"/>
<path d="M568.5 83.2 L571.5 80.2 L574.5 83.2 M568.5 87 L571.5 90 L574.5 87" fill="none" stroke="#fff" stroke-width="1.1"/>
<!-- eye -->
<ellipse cx="592.6" cy="83.6" rx="5.6" ry="3.2" fill="#c8c0d8" stroke="#555" stroke-width="1"/>
<circle cx="593.3" cy="83.2" r="2" fill="#5a4a9a"/>
<path d="M587 84 Q592.6 79.5 598.2 84" fill="none" stroke="#333" stroke-width="1.1"/>
<path d="M601.7 87.6 H607.3 L604.5 92 Z" fill="#111"/>
<!-- segmented -->
<rect x="324.6" y="103.2" width="274.6" height="20.4" rx="4" fill="#fff" stroke="#cdcdcd" stroke-width=".9"/>
<path d="M361.8 102.8 H328.8 a4.2 4.2 0 0 0 -4.2 4.2 V119.8 a4.2 4.2 0 0 0 4.2 4.2 H361.8 Z" fill="url(#segBlue)"/>
<g stroke="#dcdcdc" stroke-width="1">
<line x1="401.5" y1="103.5" x2="401.5" y2="123.5"/><line x1="441.5" y1="103.5" x2="441.5" y2="123.5"/>
<line x1="481.5" y1="103.5" x2="481.5" y2="123.5"/><line x1="521.5" y1="103.5" x2="521.5" y2="123.5"/>
<line x1="561.5" y1="103.5" x2="561.5" y2="123.5"/>
</g>
<!-- seg1 icon: property list -->
<rect x="338.5" y="105.5" width="13" height="14" fill="#fafafa" stroke="#3a3a3a" stroke-width="1"/>
<g stroke="#8a8a8a" stroke-width="1"><line x1="339" y1="108.8" x2="347.5" y2="108.8"/><line x1="339" y1="112" x2="347.5" y2="112"/><line x1="339" y1="115" x2="347.5" y2="115"/><line x1="339" y1="118" x2="347.5" y2="118"/></g>
<g fill="#1a3ad8"><circle cx="340.6" cy="107.2" r=".85"/><circle cx="340.6" cy="110.5" r=".85"/><circle cx="340.6" cy="113.5" r=".85"/><circle cx="340.6" cy="116.6" r=".85"/></g>
<rect x="347.5" y="106" width="3.6" height="13" fill="#e4e4e4"/>
<line x1="347.5" y1="105.5" x2="347.5" y2="119.5" stroke="#555" stroke-width=".8"/>
<path d="M349.4 106 L351.2 108.2 H347.6Z M349.4 119 L351.2 116.8 H347.6Z" fill="#111"/>
<circle cx="349.4" cy="110.9" r="1" fill="#2a7ad8"/>
<!-- seg2 book -->
<path d="M374.3 114.5 L374.6 116.2 L382 120 L390 108.5 L389.5 107 Z" fill="#fafafa" stroke="#5a5a5a" stroke-width=".8" stroke-linejoin="round"/>
<path d="M378.6 105.1 L388.8 106.6 L382 117.6 L374.3 114.5 Z" fill="#4f7db0" stroke="#2f4d70" stroke-width=".8" stroke-linejoin="round"/>
<circle cx="381.4" cy="110.9" r="1.5" fill="#e8f0fa"/>
<!-- seg3 gear -->
<g transform="translate(421.8 112.8)">
<g fill="#7f9096" id="gt"><rect x="-1.5" y="-8" width="3" height="3.5" rx=".6"/></g>
<use href="#gt" transform="rotate(45)"/><use href="#gt" transform="rotate(90)"/><use href="#gt" transform="rotate(135)"/><use href="#gt" transform="rotate(180)"/><use href="#gt" transform="rotate(225)"/><use href="#gt" transform="rotate(270)"/><use href="#gt" transform="rotate(315)"/>
<circle r="4.4" fill="none" stroke="#7f9096" stroke-width="2.6"/>
<circle r="2.6" fill="none" stroke="#c4d4d8" stroke-width=".9"/>
</g>
<!-- seg4 shapes -->
<rect x="453" y="110.5" width="6.5" height="6.5" fill="#8a949c" stroke="#4a5058" stroke-width=".8"/>
<circle cx="466.5" cy="109" r="3.6" fill="#8a949c" stroke="#4a5058" stroke-width=".8"/>
<path d="M461.8 119.8 L465 113.5 L468.2 119.8 Z" fill="#8a949c" stroke="#4a5058" stroke-width=".8"/>
<!-- seg5 graph -->
<path d="M494.8 105.5 V120.3 H509" fill="none" stroke="#333" stroke-width="1"/>
<path d="M494 107 L494.8 105.5 L495.6 107 M507.5 119.5 L509 120.3 L507.5 121.1" fill="none" stroke="#333" stroke-width=".7"/>
<path d="M497.5 115.8 L500.2 107.4 L505.2 117 L509.3 114.4" fill="none" stroke="#1a3ad0" stroke-width="1.2"/>
<!-- seg6 monitor -->
<rect x="534.5" y="105.8" width="15" height="11.2" rx="1.5" fill="url(#monG)" stroke="#3a444c" stroke-width="1"/>
<rect x="540.5" y="117" width="3" height="2.5" fill="#555"/>
<rect x="537.5" y="119.5" width="9" height="1.4" fill="#444"/>
<!-- seg7 dots -->
<circle cx="576.2" cy="112.8" r="1.35" fill="#222"/><circle cx="581.7" cy="112.8" r="1.35" fill="#222"/><circle cx="587.2" cy="112.8" r="1.35" fill="#222"/>
</svg>
<div class="a" style="left:32.3px;top:25.5px;font-size:11.5px;color:#1a1a1a">Viereck</div>
<div class="hdr" style="top:75px"><div class="tr"></div><div class="t">Objekte</div></div><div class="row" style="top:95px"><div class="k">Typ</div><div class="cd"></div><div class="v vp">Viereck</div><svg class="ud" width="8" height="14" viewBox="0 0 8 14"><path d="M4 1L6.8 5H1.2z M4 12L6.8 8H1.2z" fill="#1a1a1a"/></svg></div><div class="row" style="top:115px"><div class="k">Objektname</div><div class="cd"></div><div class="v">Viereck</div></div><div class="hdr" style="top:135px"><div class="tr"></div><div class="t">Koordinaten &amp; Größe</div></div><div class="row" style="top:155px"><div class="k">Links</div><div class="cd"></div><div class="v">20</div></div><div class="row" style="top:175px"><div class="k">Oben</div><div class="cd"></div><div class="v">24</div></div><div class="row" style="top:195px"><div class="k">Rechts</div><div class="cd"></div><div class="v">205</div></div><div class="row" style="top:215px"><div class="k">Unten</div><div class="cd"></div><div class="v">131</div></div><div class="row" style="top:235px"><div class="k">Breite</div><div class="cd"></div><div class="v">185</div></div><div class="row" style="top:255px"><div class="k">Höhe</div><div class="cd"></div><div class="v">107</div></div><div class="hdr" style="top:275px"><div class="tr"></div><div class="t">Vergrößerungsoptionen</div></div><div class="row" style="top:295px"><div class="k">Horizon...Größe</div><div class="cd"></div><div class="v vp">Nichts</div><svg class="ud" width="8" height="14" viewBox="0 0 8 14"><path d="M4 1L6.8 5H1.2z M4 12L6.8 8H1.2z" fill="#1a1a1a"/></svg></div><div class="row" style="top:315px"><div class="k">Vertikale Größe</div><div class="cd"></div><div class="v vp">Nichts</div><svg class="ud" width="8" height="14" viewBox="0 0 8 14"><path d="M4 1L6.8 5H1.2z M4 12L6.8 8H1.2z" fill="#1a1a1a"/></svg></div><div class="hdr" style="top:335px"><div class="tr"></div><div class="t">Anzeige</div></div><div class="row" style="top:355px"><div class="k">Unsicht...tandard</div><div class="cd"></div><div class="cb"></div></div><div class="hdr" style="top:375px"><div class="tr"></div><div class="t">Darstellung</div></div><div class="row" style="top:395px"><div class="k">Plattform</div><div class="cd"></div><div class="v vp">Vererbt von Formular</div><svg class="ud" width="8" height="14" viewBox="0 0 8 14"><path d="M4 1L6.8 5H1.2z M4 12L6.8 8H1.2z" fill="#1a1a1a"/></svg></div><div class="hdr" style="top:415px"><div class="tr"></div><div class="t">Hintergrund und Rahmen</div></div><div class="row sel" style="top:435px"><div class="k">Füllfarbe</div><div class="cd"></div><div class="well" style="background:#f00"></div></div><div class="row" style="top:455px"><div class="k">Rahmenstil</div><div class="cd"></div><div class="v vp">Standard</div><svg class="ud" width="8" height="14" viewBox="0 0 8 14"><path d="M4 1L6.8 5H1.2z M4 12L6.8 8H1.2z" fill="#1a1a1a"/></svg></div><div class="row" style="top:475px"><div class="k">Linienfarbe</div><div class="cd"></div><div class="well" style="background:#000"></div></div><div class="row" style="top:495px"><div class="k">Linienstärke</div><div class="cd"></div><div class="v">1</div></div><div class="row" style="top:515px"><div class="k"></div><div class="cd"></div></div><div class="row" style="top:535px"><div class="k"></div><div class="cd"></div></div><div id="scr" class="a"></div><div id="tline" class="a"></div><div id="foot" class="a">Alle Themen</div></div>
</body></html>
